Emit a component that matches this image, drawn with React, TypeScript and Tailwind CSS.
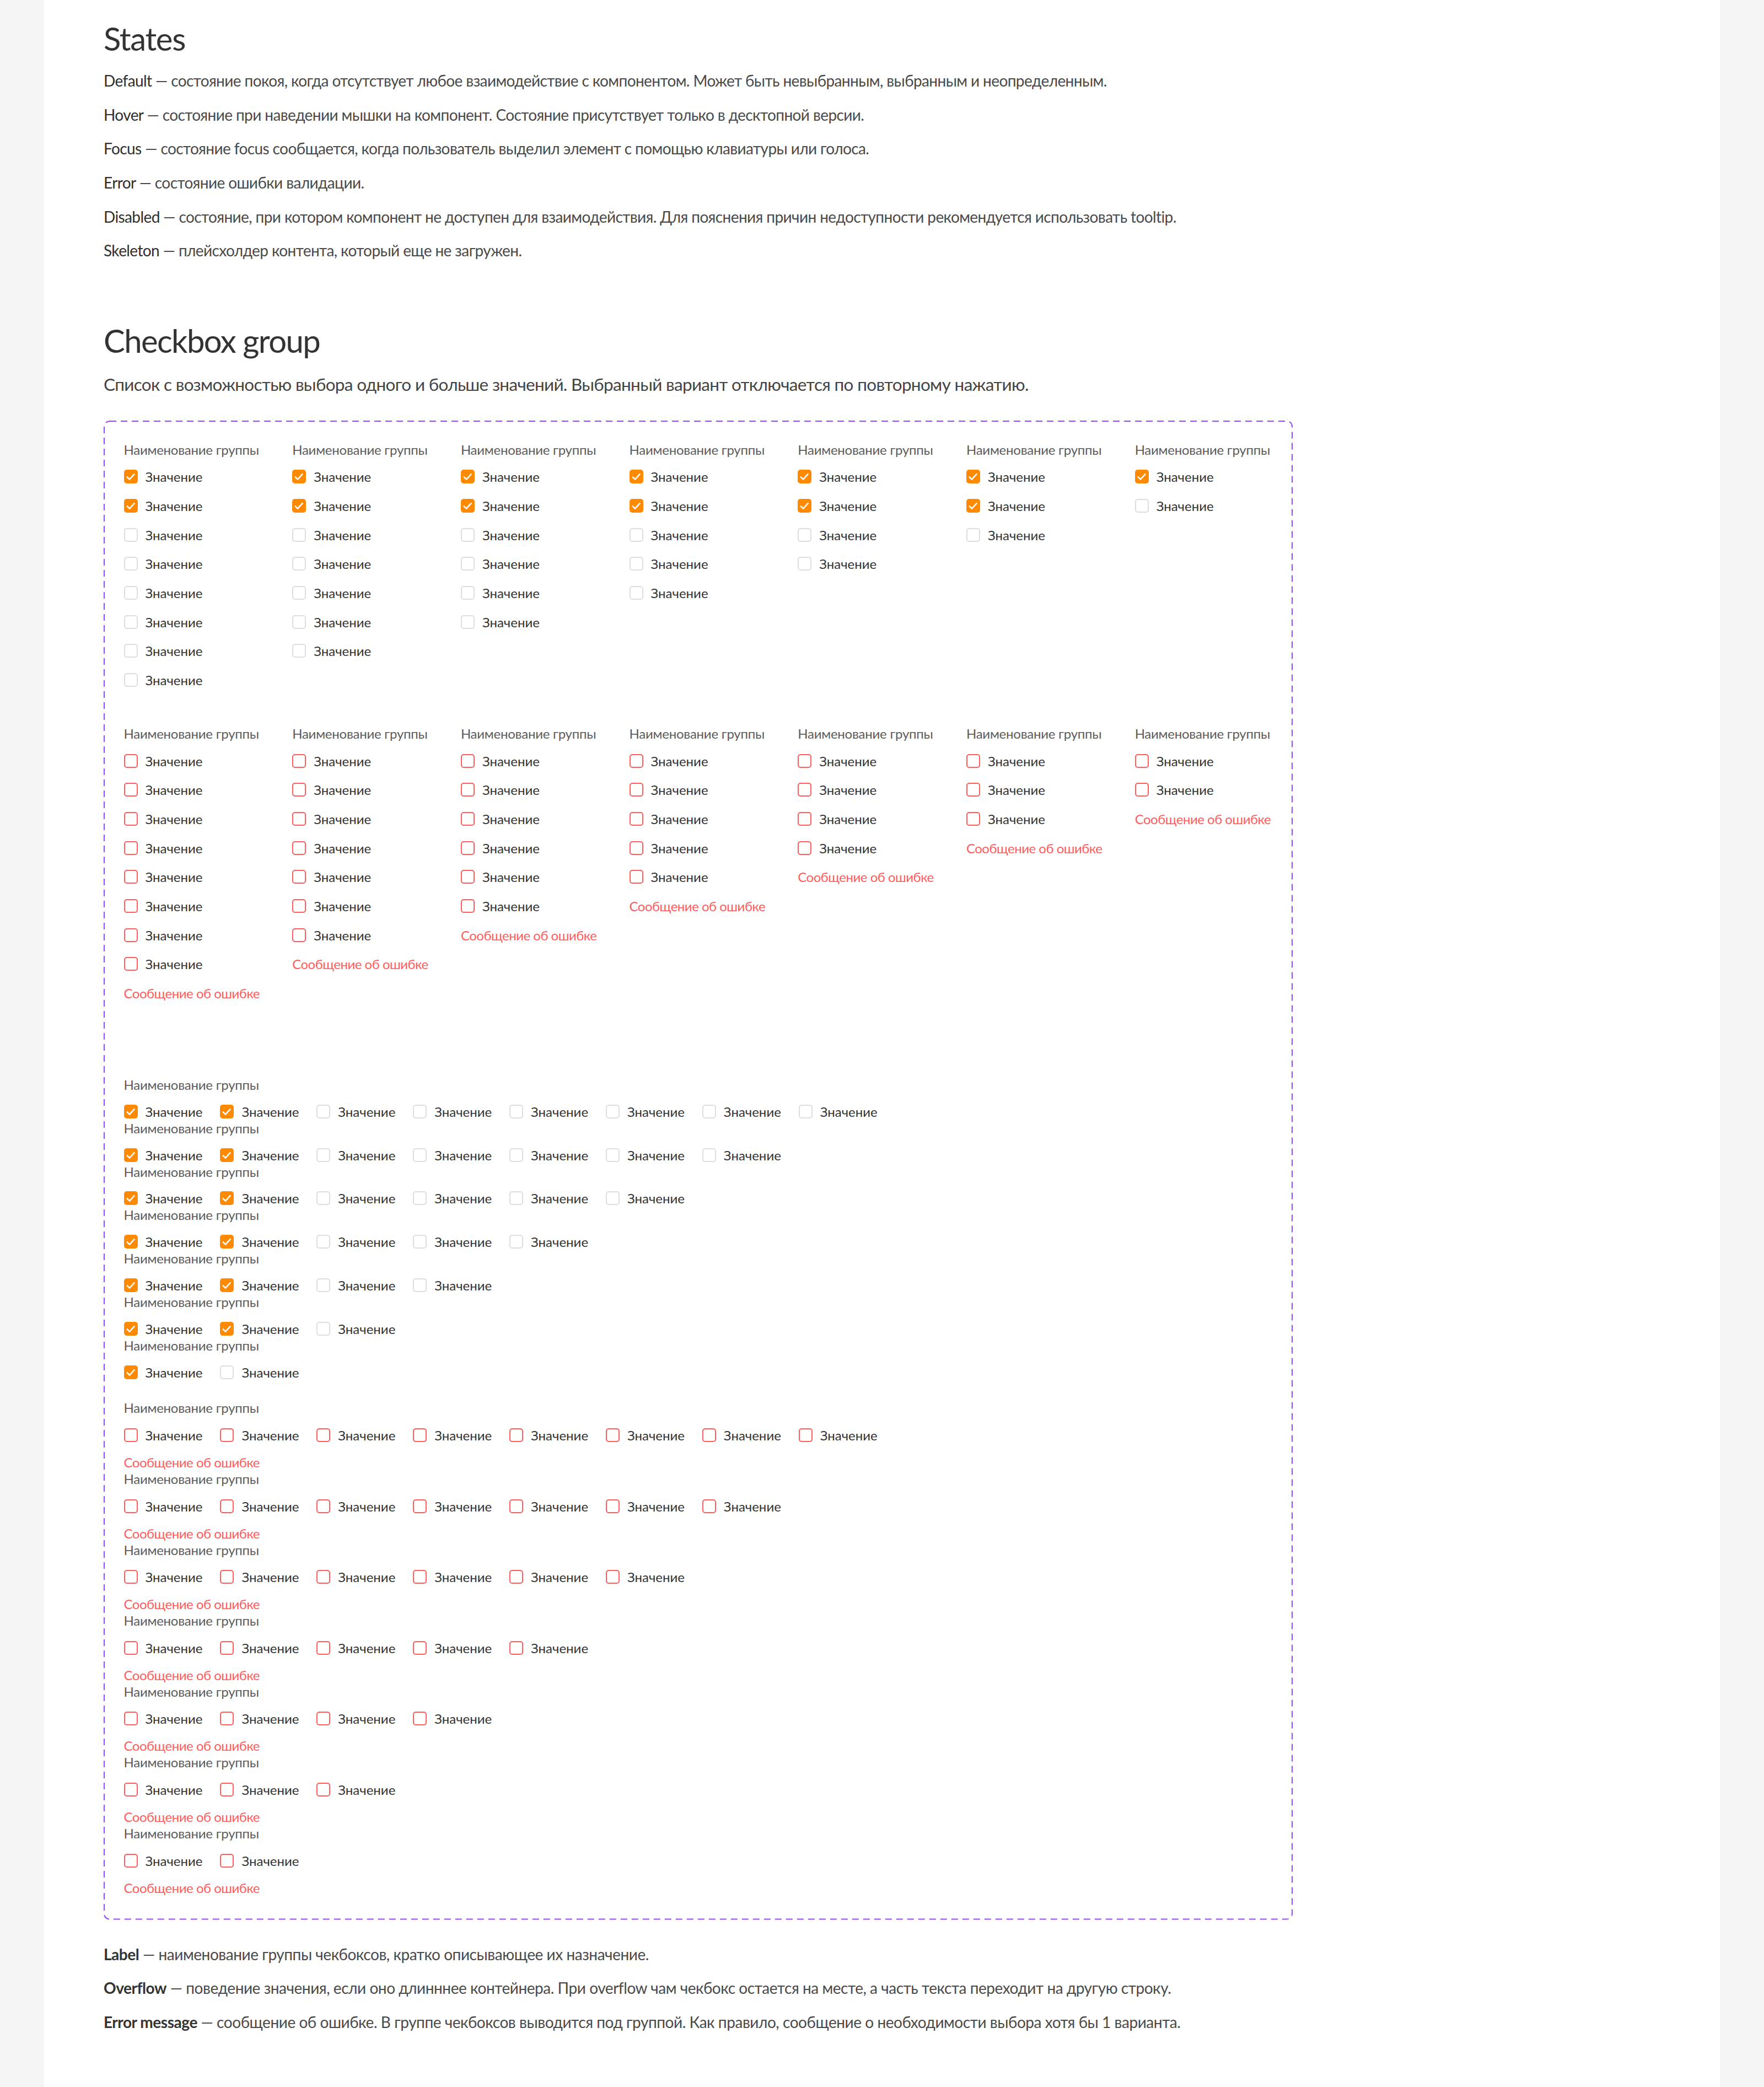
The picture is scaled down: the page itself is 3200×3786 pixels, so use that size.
import React from 'react';

// --- DATA ---
const states = [
  { term: 'Default', text: 'состояние покоя, когда отсутствует любое взаимодействие с компонентом. Может быть невыбранным, выбранным и неопределенным.' },
  { term: 'Hover', text: 'состояние при наведении мышки на компонент. Состояние присутствует только в десктопной версии.' },
  { term: 'Focus', text: 'состояние focus сообщается, когда пользователь выделил элемент с помощью клавиатуры или голоса.' },
  { term: 'Error', text: 'состояние ошибки валидации.' },
  { term: 'Disabled', text: 'состояние, при котором компонент не доступен для взаимодействия. Для пояснения причин недоступности рекомендуется использовать tooltip.' },
  { term: 'Skeleton', text: 'плейсхолдер контента, который еще не загружен.' },
];

const notes = [
  { term: 'Label', text: 'наименование группы чекбоксов, кратко описывающее их назначение.' },
  { term: 'Overflow', text: 'поведение значения, если оно длинннее контейнера. При overflow чам чекбокс остается на месте, а часть текста переходит на другую строку.' },
  { term: 'Error message', text: 'сообщение об ошибке. В группе чекбоксов выводится под группой. Как правило, сообщение о необходимости выбора хотя бы 1 варианта.' },
];

// размеры групп: от 8 до 2 значений
const groupSizes = [8, 7, 6, 5, 4, 3, 2];

type BoxState = 'checked' | 'empty' | 'error';

const Checkbox = ({ state }: { state: BoxState }) => {
  if (state === 'checked') {
    return (
      <span className="flex h-[25px] w-[25px] shrink-0 items-center justify-center rounded-[5px] bg-[#ff8a00]">
        <svg viewBox="0 0 25 25" className="h-[25px] w-[25px]" fill="none">
          <path d="M5.8 13.4 L10 17.6 L18.6 8.2" stroke="#ffffff" strokeWidth="2.6" strokeLinecap="round" strokeLinejoin="round" />
        </svg>
      </span>
    );
  }
  return (
    <span
      className={`block h-[25px] w-[25px] shrink-0 rounded-[5px] border-2 bg-white ${
        state === 'error' ? 'border-[#ff5c5c]' : 'border-[#dedede]'
      }`}
    ></span>
  );
};

const Item = ({ state, fixed }: { state: BoxState; fixed?: boolean }) => (
  <div className={`flex h-[31px] items-center gap-[14px] ${fixed ? 'w-[143.4px] shrink-0' : ''}`}>
    <Checkbox state={state} />
    <span className="whitespace-nowrap text-[24px] leading-[31px] text-[#333333]">Значение</span>
  </div>
);

const itemState = (i: number, count: number, error: boolean): BoxState => {
  if (error) return 'error';
  if (count === 2) return i === 0 ? 'checked' : 'empty';
  return i < 2 ? 'checked' : 'empty';
};

const GroupLabel = () => (
  <div className="whitespace-nowrap text-[24px] leading-[30px] tracking-[-0.25px] text-[#5c5c5c]">Наименование группы</div>
);

const ErrorText = ({ lh }: { lh: string }) => (
  <div className={`whitespace-nowrap text-[24px] tracking-[-0.5px] text-[#ff5c5c] ${lh}`}>Сообщение об ошибке</div>
);

// Вертикальная группа (колонка)
const VerticalGroup = ({ count, error }: { count: number; error: boolean }) => (
  <div className="flex w-[305.7px] shrink-0 flex-col last:w-auto">
    <GroupLabel />
    <div className="mt-[18.6px] flex flex-col gap-[21.7px]">
      {[...Array(count)].map((_, i) => (
        <Item key={i} state={itemState(i, count, error)} />
      ))}
      {error && <ErrorText lh="leading-[31px]" />}
    </div>
  </div>
);

// Горизонтальная группа (строка)
const HorizontalGroup = ({ count, error }: { count: number; error: boolean }) => (
  <div className="flex flex-col">
    <GroupLabel />
    <div className={`flex gap-x-[31.5px] ${error ? 'mt-[18.6px]' : 'mt-[17.8px]'}`}>
      {[...Array(count)].map((_, i) => (
        <Item key={i} state={itemState(i, count, error)} fixed />
      ))}
    </div>
    {error && (
      <div className="mt-[19px]">
        <ErrorText lh="leading-[30px]" />
      </div>
    )}
  </div>
);

const Term = ({ term, text, bold }: { term: string; text: string; bold?: boolean }) => (
  <p
    className={`whitespace-nowrap text-[28px] leading-[61.6px] text-[#4a4a4a] ${
      bold ? 'tracking-[-0.45px]' : 'tracking-[-0.6px]'
    }`}
  >
    <span className={bold ? 'font-bold text-[#333333]' : 'text-[#2e2e2e]'}>{term}</span> — {text}
  </p>
);

export default function App() {
  return (
    <div className="min-h-screen bg-[#f5f5f5] font-['Lato',sans-serif]">
      <div className="ml-[80px] min-h-[3786px] w-[3040px] bg-white pl-[108px] pt-[29.5px] pb-[60px]">
        {/* --- STATES --- */}
        <h1 className="text-[58px] font-normal leading-[80px] tracking-[-1.3px] text-[#333333]">States</h1>
        <div className="mt-[6.8px]">
          {states.map((s) => (
            <Term key={s.term} term={s.term} text={s.text} />
          ))}
        </div>

        {/* --- CHECKBOX GROUP --- */}
        <h2 className="mt-[92.6px] text-[58px] font-normal leading-[80px] tracking-[-1.6px] text-[#333333]">Checkbox group</h2>
        <p className="mt-[18.3px] whitespace-nowrap text-[31.5px] leading-[40px] tracking-[-0.68px] text-[#444444]">
          Список с возможностью выбора одного и больше значений. Выбранный вариант отключается по повторному нажатию.
        </p>

        <div className="relative mt-[46.2px] w-[2157px] pb-[43px] pl-[36.5px] pr-[36px] pt-[37.7px]">
          {/* пунктирная рамка */}
          <svg className="pointer-events-none absolute inset-[1px] h-[calc(100%-2px)] w-[calc(100%-2px)] overflow-visible" fill="none">
            <rect x="0" y="0" width="100%" height="100%" rx="10" ry="10" stroke="#9747ff" strokeWidth="2" strokeDasharray="12 8" />
          </svg>

          {/* колонки */}
          <div className="flex items-start">
            {groupSizes.map((n, i) => (
              <VerticalGroup key={i} count={n} error={false} />
            ))}
          </div>

          {/* колонки с ошибкой */}
          <div className="mt-[67px] flex items-start">
            {groupSizes.map((n, i) => (
              <VerticalGroup key={i} count={n} error={true} />
            ))}
          </div>

          {/* строки */}
          <div className="mt-[135.8px] flex flex-col">
            {groupSizes.map((n, i) => (
              <HorizontalGroup key={i} count={n} error={false} />
            ))}
          </div>

          {/* строки с ошибкой */}
          <div className="mt-[34.9px] flex flex-col">
            {groupSizes.map((n, i) => (
              <HorizontalGroup key={i} count={n} error={true} />
            ))}
          </div>
        </div>

        {/* --- NOTES --- */}
        <div className="mt-[32.3px]">
          {notes.map((s) => (
            <Term key={s.term} term={s.term} text={s.text} bold />
          ))}
        </div>
      </div>
    </div>
  );
}
